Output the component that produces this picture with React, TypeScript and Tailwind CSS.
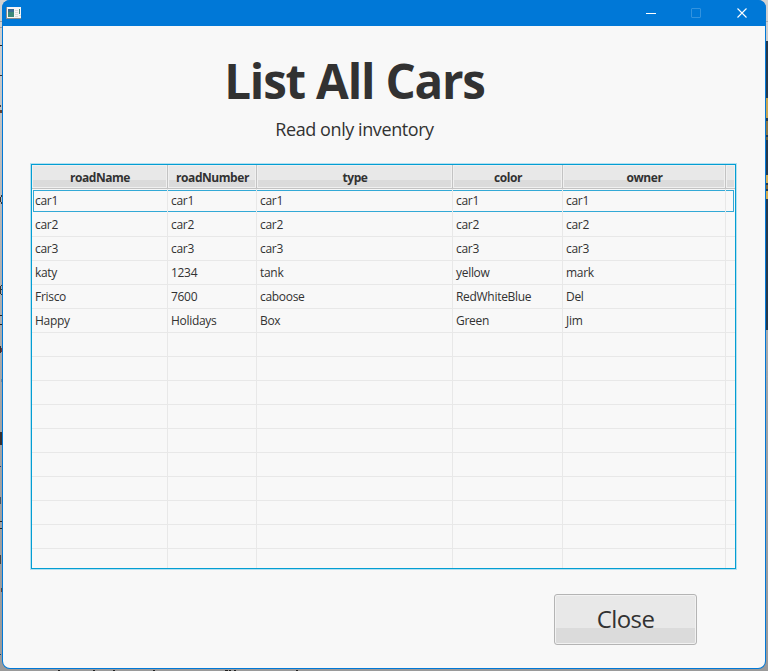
const columns = [
  { label: "roadName", cls: "w-[136px]" },
  { label: "roadNumber", cls: "w-[89px]" },
  { label: "type", cls: "w-[196px]" },
  { label: "color", cls: "w-[110px]" },
  { label: "owner", cls: "w-[163px]" },
];

const cars = [
  ["car1", "car1", "car1", "car1", "car1"],
  ["car2", "car2", "car2", "car2", "car2"],
  ["car3", "car3", "car3", "car3", "car3"],
  ["katy", "1234", "tank", "yellow", "mark"],
  ["Frisco", "7600", "caboose", "RedWhiteBlue", "Del"],
  ["Happy", "Holidays", "Box", "Green", "Jim"],
];

const rows = Array.from({ length: 16 }, (_, i) => cars[i] ?? ["", "", "", "", ""]);

// Slivers of the desktop that show around the window: [x, y, w, h, colour]
const slivers: [number, number, number, number, string][] = [
  [0, 21, 2, 1, "#999"], [0, 27, 2, 1, "#999"],
  [0, 45, 2, 1, "#222"], [0, 75, 2, 1, "#333"], [0, 105, 1, 2, "#444"], [0, 110, 2, 3, "#643"],
  [1, 195, 1, 2, "#333"], [0, 197, 1, 5, "#333"], [1, 202, 1, 2, "#333"],
  [0, 286, 1, 8, "#333"], [1, 285, 1, 1, "#333"], [1, 289, 1, 1, "#333"], [1, 294, 1, 1, "#333"],
  [0, 315, 2, 1, "#222"], [0, 324, 2, 1, "#222"],
  [0, 346, 1, 7, "#333"], [1, 348, 1, 4, "#733"],
  [1, 379, 1, 3, "#789"], [0, 432, 2, 13, "#38302e"], [0, 466, 1, 1, "#247"],
  [0, 497, 1, 7, "#456"], [0, 521, 2, 1, "#222"], [0, 528, 2, 1, "#222"],
  [0, 555, 1, 9, "#444"], [1, 588, 1, 4, "#643"], [0, 654, 1, 1, "#147"],
  [766, 21, 2, 1, "#aaa"], [766, 41, 2, 289, "#26394b"],
  [766, 98, 2, 20, "#c9a552"], [766, 121, 2, 14, "#8c7643"], [766, 137, 2, 3, "#6d613f"],
  [766, 175, 2, 8, "#d6ad50"], [766, 185, 2, 4, "#86672f"], [766, 191, 2, 8, "#d6ad50"],
  [766, 370, 2, 1, "#aaa"], [766, 376, 2, 1, "#aaa"],
  [58, 670, 2, 1, "#222"], [93, 670, 2, 1, "#222"], [113, 670, 2, 1, "#222"], [153, 670, 2, 1, "#222"],
  [225, 670, 3, 1, "#222"], [229, 670, 2, 1, "#222"], [234, 670, 2, 1, "#222"], [296, 670, 2, 1, "#222"],
];

function TitleBar() {
  return (
    <header className="flex h-[26px] shrink-0 items-center justify-between bg-[#0078d7] pl-[4px]">
      <svg width="15" height="12" viewBox="0 0 15 12" shapeRendering="crispEdges">
        <rect width="15" height="12" fill="#8b8b8b" />
        <rect x="1" width="14" height="11" fill="#f5f5f5" />
        <rect x="2" y="2" width="6" height="8" fill="#3b8878" />
        <rect x="2" y="2" width="6" height="3" fill="#386b94" />
        <path d="M9 3.5h3M9 5.5h3M9 7.5h3M9 9.5h3" stroke="#dadada" />
        <rect x="13" y="2" width="1" height="5" fill="#4a8b7b" />
        <path d="M13 8.5h2" stroke="#dadada" />
      </svg>
      <svg className="mr-[17px]" width="103" height="26" viewBox="0 0 103 26" fill="none">
        <path d="M0 13.5h10" stroke="#fff" />
        <rect x="45.5" y="8.5" width="9" height="9" rx="0.5" stroke="#3293df" />
        <path d="M91.5 8.5l9 9M100.5 8.5l-9 9" stroke="#fff" strokeWidth="1.1" />
      </svg>
    </header>
  );
}

function HeaderCell({ label, cls }: { label: string; cls: string }) {
  return (
    <div className={`${cls} flex h-[24px] shrink-0 items-center justify-center border-r border-b border-r-[#c3c3c3] border-b-[#c3c3c3] bg-[linear-gradient(#e8e8e8_65%,#dbdbdb_65%)] pt-[2px] pl-px text-[12px] font-bold shadow-[inset_0_0_0_1px_#f0f0f0]`}>
      <span className="tracking-[-0.45px]">{label}</span>
    </div>
  );
}

function CarTable() {
  return (
    <section className="ml-[28px] mt-[22px] flex h-[405px] w-[705px] shrink-0 flex-col overflow-hidden border border-[#039ed3] shadow-[0_0_0_1px_#b4e0f0]">
      <div className="flex shrink-0">
        {columns.map((c) => <HeaderCell key={c.label} {...c} />)}
        <div className="h-[24px] grow border-b border-[#c3c3c3] bg-[linear-gradient(#e8e8e8_65%,#dbdbdb_65%)] shadow-[inset_0_0_0_1px_#f0f0f0]" />
      </div>
      {rows.map((row, r) => (
        <div key={r} className={`relative flex h-[24px] shrink-0 ${r === 0 ? "" : "border-b border-[#e8e8e8]"}`}>
          {r === 0 && <div className="absolute top-px left-px h-[22px] w-[701px] border border-[#33a9d6]" />}
          {row.map((text, i) => (
            <div key={i} className={`${columns[i].cls} relative flex shrink-0 items-center border-r border-[#e8e8e8] pl-[3px] text-[12px]`}>
              <span className="tracking-[-0.3px]">{text}</span>
            </div>
          ))}
        </div>
      ))}
    </section>
  );
}

export default function App() {
  return (
    <div className="relative h-[671px] w-[768px] overflow-hidden bg-[linear-gradient(#d2d2d2,#b8b8b8_30%,#a5a5a5_60%,#9a9a9a)] pl-[2px] font-['Open_Sans','Noto_Sans',sans-serif] text-[#323232]">
      <svg className="absolute inset-0" width="768" height="671" shapeRendering="crispEdges">
        {slivers.map(([x, y, w, h, fill], i) => <rect key={i} x={x} y={y} width={w} height={h} fill={fill} />)}
      </svg>
      <main className="relative flex h-[669px] w-[764px] flex-col overflow-hidden rounded-[8px] bg-[#0078d7]">
        <TitleBar />
        <div className="mx-px mb-px flex grow flex-col rounded-b-[7px] bg-[#f8f8f8]">
          <div className="flex w-[703px] flex-col items-center">
            <h1 className="mt-[23px] h-[64px] text-[47.5px] leading-[64px] font-bold whitespace-nowrap tracking-[-1.2px]">List All Cars</h1>
            <p className="mt-[4px] h-[25px] text-[18px] leading-[25px] whitespace-nowrap tracking-[-0.42px]">Read only inventory</p>
          </div>
          <CarTable />
          <button className="mt-[25px] ml-[551px] flex h-[51px] w-[143px] shrink-0 items-center justify-center rounded-[3px] border border-[#b4b4b4] bg-[linear-gradient(#e8e8e8_68%,#dbdbdb_68%)] text-[24px] shadow-[inset_0_0_0_1px_#f2f2f2]">
            <span className="-mt-px tracking-[-0.6px]">Close</span>
          </button>
        </div>
      </main>
    </div>
  );
}
